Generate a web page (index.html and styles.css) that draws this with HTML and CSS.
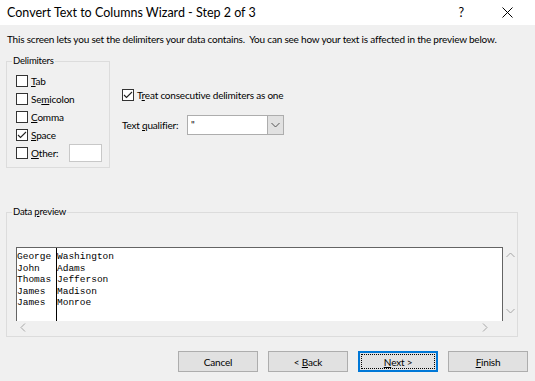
FILE: index.html
```html
<!DOCTYPE html>
<html lang="en">
<head>
    <meta charset="UTF-8">
    <title>Convert Text to Columns Wizard - Step 2 of 3</title>
    <link rel="stylesheet" href="styles.css">
</head>
<body>
<div class="dialog">
    <!-- Title bar -->
    <div class="titlebar">
        <span class="title">Convert Text to Columns Wizard - Step 2 of 3</span>
        <span class="help">?</span>
        <svg class="close" width="11" height="11" viewBox="0 0 11 11">
            <path d="M0.5 0.5 L10.5 10.5 M10.5 0.5 L0.5 10.5" stroke="#000" stroke-width="1" fill="none"/>
        </svg>
    </div>

    <div class="content">
        <p class="intro">This screen lets you set the delimiters your data contains.&nbsp; You can see how your text is affected in the preview below.</p>

        <div class="options">
            <fieldset class="delims">
                <legend>Delimiters</legend>
                <div class="row"><span class="check"></span><span><u>T</u>ab</span></div>
                <div class="row"><span class="check"></span><span>Se<u>m</u>icolon</span></div>
                <div class="row"><span class="check"></span><span><u>C</u>omma</span></div>
                <div class="row"><span class="check">
                    <svg width="10" height="10" viewBox="0 0 10 10"><path d="M1 5 L3.5 7.5 L9 2" stroke="#222" stroke-width="1.1" fill="none"/></svg>
                </span><span><u>S</u>pace</span></div>
                <div class="row"><span class="check"></span><span class="other-label"><u>O</u>ther:</span><span class="other-box"></span></div>
            </fieldset>

            <div class="side">
                <div class="row"><span class="check">
                    <svg width="10" height="10" viewBox="0 0 10 10"><path d="M1 5 L3.5 7.5 L9 2" stroke="#222" stroke-width="1.1" fill="none"/></svg>
                </span><span>T<u>r</u>eat consecutive delimiters as one</span></div>
                <div class="qualifier">
                    <span class="qualifier-label">Text <u>q</u>ualifier:</span>
                    <div class="select">
                        <span class="select-value">"</span>
                        <span class="select-btn">
                            <svg width="9" height="6" viewBox="0 0 9 6"><path d="M0.5 1 L4.5 5 L8.5 1" stroke="#555" stroke-width="1" fill="none"/></svg>
                        </span>
                    </div>
                </div>
            </div>
        </div>

        <fieldset class="preview">
            <legend>Data <u>p</u>review</legend>
            <div class="preview-top">
                <div class="grid">
                    <div class="col col-first">George<br>John<br>Thomas<br>James<br>James</div>
                    <div class="col">Washington<br>Adams<br>Jefferson<br>Madison<br>Monroe</div>
                </div>
                <div class="vscroll">
                    <svg width="9" height="6" viewBox="0 0 9 6"><path d="M0.5 5 L4.5 1 L8.5 5" stroke="#a6a6a6" stroke-width="1" fill="none"/></svg>
                    <svg width="9" height="6" viewBox="0 0 9 6"><path d="M0.5 1 L4.5 5 L8.5 1" stroke="#a6a6a6" stroke-width="1" fill="none"/></svg>
                </div>
            </div>
            <div class="hscroll">
                <svg width="6" height="9" viewBox="0 0 6 9"><path d="M5 0.5 L1 4.5 L5 8.5" stroke="#a6a6a6" stroke-width="1" fill="none"/></svg>
                <svg width="6" height="9" viewBox="0 0 6 9"><path d="M1 0.5 L5 4.5 L1 8.5" stroke="#a6a6a6" stroke-width="1" fill="none"/></svg>
            </div>
        </fieldset>

        <div class="buttons">
            <button>Cancel</button>
            <button>&lt; <u>B</u>ack</button>
            <button class="default"><span class="focus"><u>N</u>ext &gt;</span></button>
            <button><u>F</u>inish</button>
        </div>
    </div>
</div>
</body>
</html>
```

FILE: styles.css
```css
body {
    margin: 0;
    font-family: Lato, "Liberation Sans", sans-serif;
    font-size: 10px;
    letter-spacing: -0.2px;
    line-height: 14px;
    color: #000;
    background-color: #f0f0f0;
}

.dialog {
    width: 535px;
    height: 381px;
    overflow: hidden;
    background-color: #f0f0f0;
}

/* Title bar */
.titlebar {
    height: 25px;
    background-color: #fff;
    display: flex;
    align-items: center;
    padding-left: 7px;
    letter-spacing: 0;
}

.title {
    font-size: 12.5px;
    flex: 1;
}

.help {
    font-size: 12.5px;
    margin-right: 38px;
}

.close {
    margin-right: 22px;
}

/* Main area */
.content {
    padding: 7px 7px 0 6px;
}

.intro {
    margin: 0 0 8px 1px;
    white-space: nowrap;
}

.options {
    display: flex;
}

fieldset {
    margin: 0;
    border: 1px solid #dcdcdc;
}

legend {
    padding: 0 1px;
    font-size: 9.5px;
}

.delims {
    width: 104px;
    box-sizing: border-box;
    padding: 4px 0 5px 5px;
}

.delims .row {
    padding-left: 4px;
}

.row {
    display: flex;
    align-items: center;
    height: 18px;
}

.check {
    width: 10px;
    height: 10px;
    border: 1px solid #333;
    background-color: #fff;
    margin-right: 3px;
    display: flex;
    align-items: center;
    justify-content: center;
}

.other-label {
    width: 38px;
}

.other-box {
    width: 31px;
    height: 16px;
    background-color: #fff;
    border: 1px solid #c8c8c8;
}

.side {
    margin: 32px 0 0 12px;
}

.qualifier {
    display: flex;
    align-items: center;
    margin-top: 11px;
}

.qualifier-label {
    width: 65px;
}

.select {
    width: 97px;
    height: 20px;
    box-sizing: border-box;
    border: 1px solid #adadad;
    background-color: #fff;
    display: flex;
}

.select-value {
    flex: 1;
    padding-left: 3px;
    line-height: 16px;
}

.select-btn {
    width: 15px;
    background-color: #e1e1e1;
    border-left: 1px solid #adadad;
    display: flex;
    align-items: center;
    justify-content: center;
}

/* Data preview */
.preview {
    margin-top: 37px;
    width: 512px;
    box-sizing: border-box;
    padding: 28px 0 2px 5px;
}

.preview-top {
    display: flex;
    margin-left: 4px;
}

.grid {
    width: 487px;
    height: 74px;
    box-sizing: border-box;
    border: 1px solid #646464;
    border-bottom: none;
    background-color: #fff;
    display: flex;
    font-family: "Liberation Mono", monospace;
    font-size: 9.5px;
    letter-spacing: 0;
    line-height: 11.5px;
}

.col {
    padding-top: 3px;
}

.col-first {
    width: 39px;
    border-right: 1px solid #000;
}

.vscroll {
    flex: 1;
    display: flex;
    flex-direction: column;
    justify-content: space-between;
    align-items: center;
    padding: 5px 0 7px;
}

.hscroll {
    width: 487px;
    height: 13px;
    margin-left: 4px;
    display: flex;
    justify-content: space-between;
    align-items: center;
    padding: 0 15px 0 4px;
    box-sizing: border-box;
}

/* Buttons */
.buttons {
    display: flex;
    justify-content: flex-end;
    gap: 10px;
    margin-top: 14px;
}

button {
    width: 80px;
    height: 21px;
    padding: 0;
    font-family: Lato, "Liberation Sans", sans-serif;
    font-size: 10px;
    letter-spacing: -0.2px;
    color: #000;
    background-color: #e1e1e1;
    border: 1px solid #adadad;
}

button.default {
    border: 2px solid #0078d7;
    padding: 1px;
}

.focus {
    display: flex;
    align-items: center;
    justify-content: center;
    height: 100%;
    border: 1px dotted #000;
    box-sizing: border-box;
}
```
